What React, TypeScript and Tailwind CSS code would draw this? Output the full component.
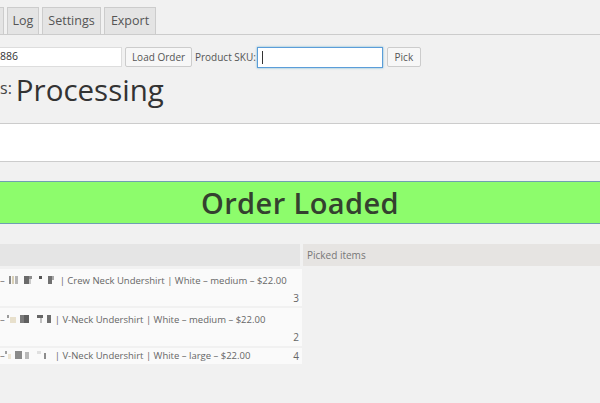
import React from "react";

type Block = [number, number, number, number, string];

function Redact({ blocks, width }: { blocks: Block[]; width: number }) {
  return (
    <svg width={width} height={10} className="inline-block align-[-1px]" viewBox={`0 0 ${width} 10`}>
      {blocks.map((b, i) => (
        <rect key={i} x={b[0]} y={b[1]} width={b[2]} height={b[3]} fill={b[4]} />
      ))}
    </svg>
  );
}

const r1: Block[] = [
  [2, 1, 2, 8, "#8a8a8a"],
  [5, 1, 2, 8, "#d9cfb4"],
  [8, 1, 3, 8, "#b5b5b5"],
  [17, 1, 5, 8, "#6a6a6a"],
  [22, 1, 3, 3, "#8f8f8f"],
  [22, 4, 2, 5, "#c9c9c9"],
  [32, 1, 3, 3, "#555"],
  [41, 1, 4, 8, "#707070"],
  [45, 1, 2, 4, "#a8a8a8"],
];
const r2: Block[] = [
  [2, 1, 2, 3, "#9a9a9a"],
  [5, 3, 6, 6, "#e8e0cc"],
  [15, 1, 4, 8, "#7a7a7a"],
  [19, 1, 5, 8, "#5f5f5f"],
  [32, 1, 6, 3, "#666"],
  [35, 4, 2, 5, "#c0c0c0"],
  [42, 1, 4, 8, "#6e6e6e"],
];
const r3: Block[] = [
  [0, 1, 2, 3, "#a0a0a0"],
  [3, 4, 3, 5, "#ece4d2"],
  [10, 1, 7, 8, "#8a8a8a"],
  [20, 2, 4, 7, "#b8b8b8"],
  [32, 1, 4, 3, "#e0e0e0"],
  [39, 3, 2, 6, "#8c8c8c"],
];

export default function App() {
  return (
    <div className="w-[600px] h-[403px] overflow-hidden bg-[#f1f1f1] text-[#555] font-['Open_Sans',sans-serif]">
      {/* Tabs */}
      <div className="flex items-end gap-[3px] h-[35px] border-b border-[#ccc]">
        <div className="w-[4px] h-[27px] bg-[#e4e4e4] border-r border-t border-[#ccc]" />
        <div className="w-[32px] h-[27px] flex items-center justify-center bg-[#e4e4e4] border border-b-0 border-[#ccc] text-[12.5px] text-[#555]">Log</div>
        <div className="w-[59px] h-[27px] flex items-center justify-center bg-[#e4e4e4] border border-b-0 border-[#ccc] text-[12.5px] text-[#555]">Settings</div>
        <div className="w-[52px] h-[27px] flex items-center justify-center bg-[#e4e4e4] border border-b-0 border-[#ccc] text-[12.5px] text-[#555]">Export</div>
      </div>

      {/* Form row */}
      <div className="flex items-center mt-[12px] h-[20px] text-[10px]">
        <div className="w-[122px] h-[20px] bg-white border border-l-0 border-[#ddd] flex items-center text-[10.5px] text-[#333]">886</div>
        <div className="ml-[3px] w-[67px] h-[20px] bg-[#f7f7f7] border border-[#ccc] flex items-center justify-center text-[#555] rounded-[2px]">Load Order</div>
        <span className="ml-[3px] text-[#555]">Product SKU:</span>
        <div className="ml-[1px] w-[126px] h-[21px] bg-white border border-[#5b9dd9] shadow-[0_0_2px_rgba(30,140,190,0.6)] flex items-center pl-[4px]">
          <div className="w-px h-[13px] bg-[#333]" />
        </div>
        <div className="ml-[4px] w-[34px] h-[20px] bg-[#f7f7f7] border border-[#ccc] flex items-center justify-center text-[#555] rounded-[2px]">Pick</div>
      </div>

      {/* Status */}
      <div className="flex items-start h-[42px] mt-[3px]">
        <span className="text-[16px] leading-[20px] mt-[8px] text-[#444]">s:</span>
        <span className="ml-[4px] text-[29.5px] leading-[40px] text-[#333]">Processing</span>
      </div>

      {/* White box */}
      <div className="mt-[11px] h-[39px] bg-white border-y border-[#ccc]" />

      {/* Banner */}
      <div className="mt-[19px] h-[43px] bg-[#8dfc6c] border-y border-[#6f9fb2] flex items-center justify-center">
        <span className="text-[29px] leading-[40px] font-semibold tracking-[0.4px] text-[#34412f]">Order Loaded</span>
      </div>

      {/* Table */}
      <div className="mt-[20px] flex gap-[3px] h-[22px] text-[10px]">
        <div className="w-[300px] bg-[#e5e5e5]" />
        <div className="flex-1 bg-[#e6e4e2] flex items-center pl-[4px] text-[#777]">Picked items</div>
      </div>
      <div className="w-[302px] flex flex-col gap-[2px] mt-[3px] text-[9.5px] text-[#666]">
        <div className="h-[37px] bg-[#fafafa] flex flex-col pt-[4px]">
          <div className="leading-[15px] whitespace-nowrap">– <Redact blocks={r1} width={50} /> | Crew Neck Undershirt | White – medium – $22.00</div>
          <div className="leading-[15px] mt-[3px] text-right pr-[3px] text-[10px]">3</div>
        </div>
        <div className="h-[38px] bg-[#fafafa] flex flex-col pt-[4px]">
          <div className="leading-[15px] whitespace-nowrap">–<Redact blocks={r2} width={50} />| V-Neck Undershirt | White – medium – $22.00</div>
          <div className="leading-[15px] mt-[3px] text-right pr-[3px] text-[10px]">2</div>
        </div>
        <div className="h-[16px] bg-[#fafafa] flex justify-between items-center">
          <div className="leading-[16px] whitespace-nowrap">–<Redact blocks={r3} width={50} />| V-Neck Undershirt | White – large – $22.00</div>
          <div className="leading-[16px] pr-[3px] text-[10px]">4</div>
        </div>
      </div>
    </div>
  );
}
